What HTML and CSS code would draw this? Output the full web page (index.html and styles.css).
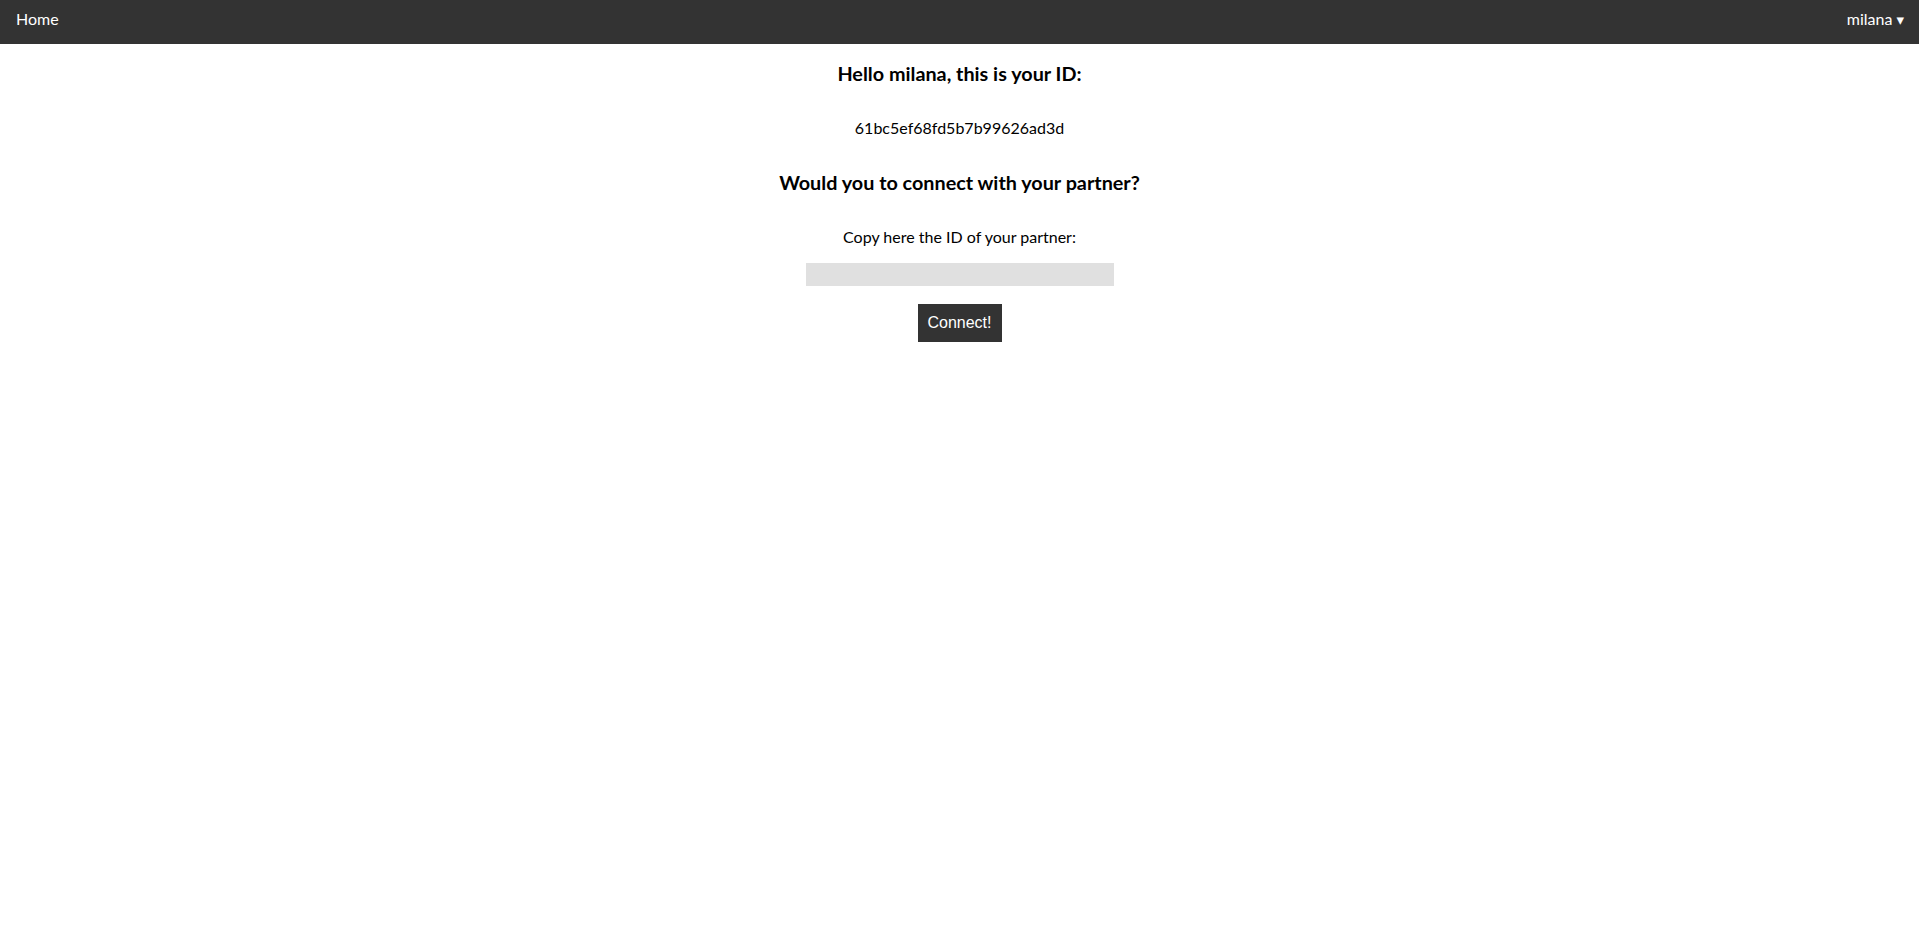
FILE: index.html
```html
<!DOCTYPE html>
<html>
<head>
<meta charset="utf-8">
<link rel="stylesheet" href="styles.css">
</head>
<body>
<nav class="topnav">
  <a class="nav-link" href="#">Home</a>
  <a class="nav-link user" href="#">milana <span class="caret">▾</span></a>
</nav>
<main class="content">
  <h3 class="title">Hello milana, this is your ID:</h3>
  <p class="text">61bc5ef68fd5b7b99626ad3d</p>
  <h3 class="title">Would you to connect with your partner?</h3>
  <p class="text">Copy here the ID of your partner:</p>
  <input class="partner-input" type="text">
  <button class="connect-btn">Connect!</button>
</main>
</body>
</html>
```
FILE: styles.css
```css
html, body {
  margin: 0;
  padding: 0;
  background: #fff;
}
body {
  font-family: Lato, "DejaVu Sans", sans-serif;
  color: #000;
}
.topnav {
  background: #333;
  height: 44px;
  box-sizing: border-box;
  display: flex;
  justify-content: space-between;
  align-items: flex-start;
  padding: 10px 15px 0 16px;
}
.nav-link {
  color: #fff;
  text-decoration: none;
  font-size: 16px;
  line-height: 18px;
}
.caret {
  font-size: 15px;
}
.content {
  display: flex;
  flex-direction: column;
  align-items: center;
}
.title {
  font-size: 19.8px;
  line-height: 21.5px;
  font-weight: 700;
  margin: 18.72px 0;
}
.text {
  font-size: 16px;
  line-height: 18.6px;
  margin: 16px 0;
}
.partner-input {
  width: 308px;
  height: 23px;
  box-sizing: border-box;
  border: none;
  background: #e0e0e0;
  margin: 0;
  padding: 0 6px;
  font-family: inherit;
}
.connect-btn {
  margin-top: 18px;
  width: 84px;
  height: 38px;
  background: #333;
  color: #fff;
  border: none;
  font-family: "Liberation Sans", Arial, sans-serif;
  font-size: 16px;
  padding: 0;
}
```
